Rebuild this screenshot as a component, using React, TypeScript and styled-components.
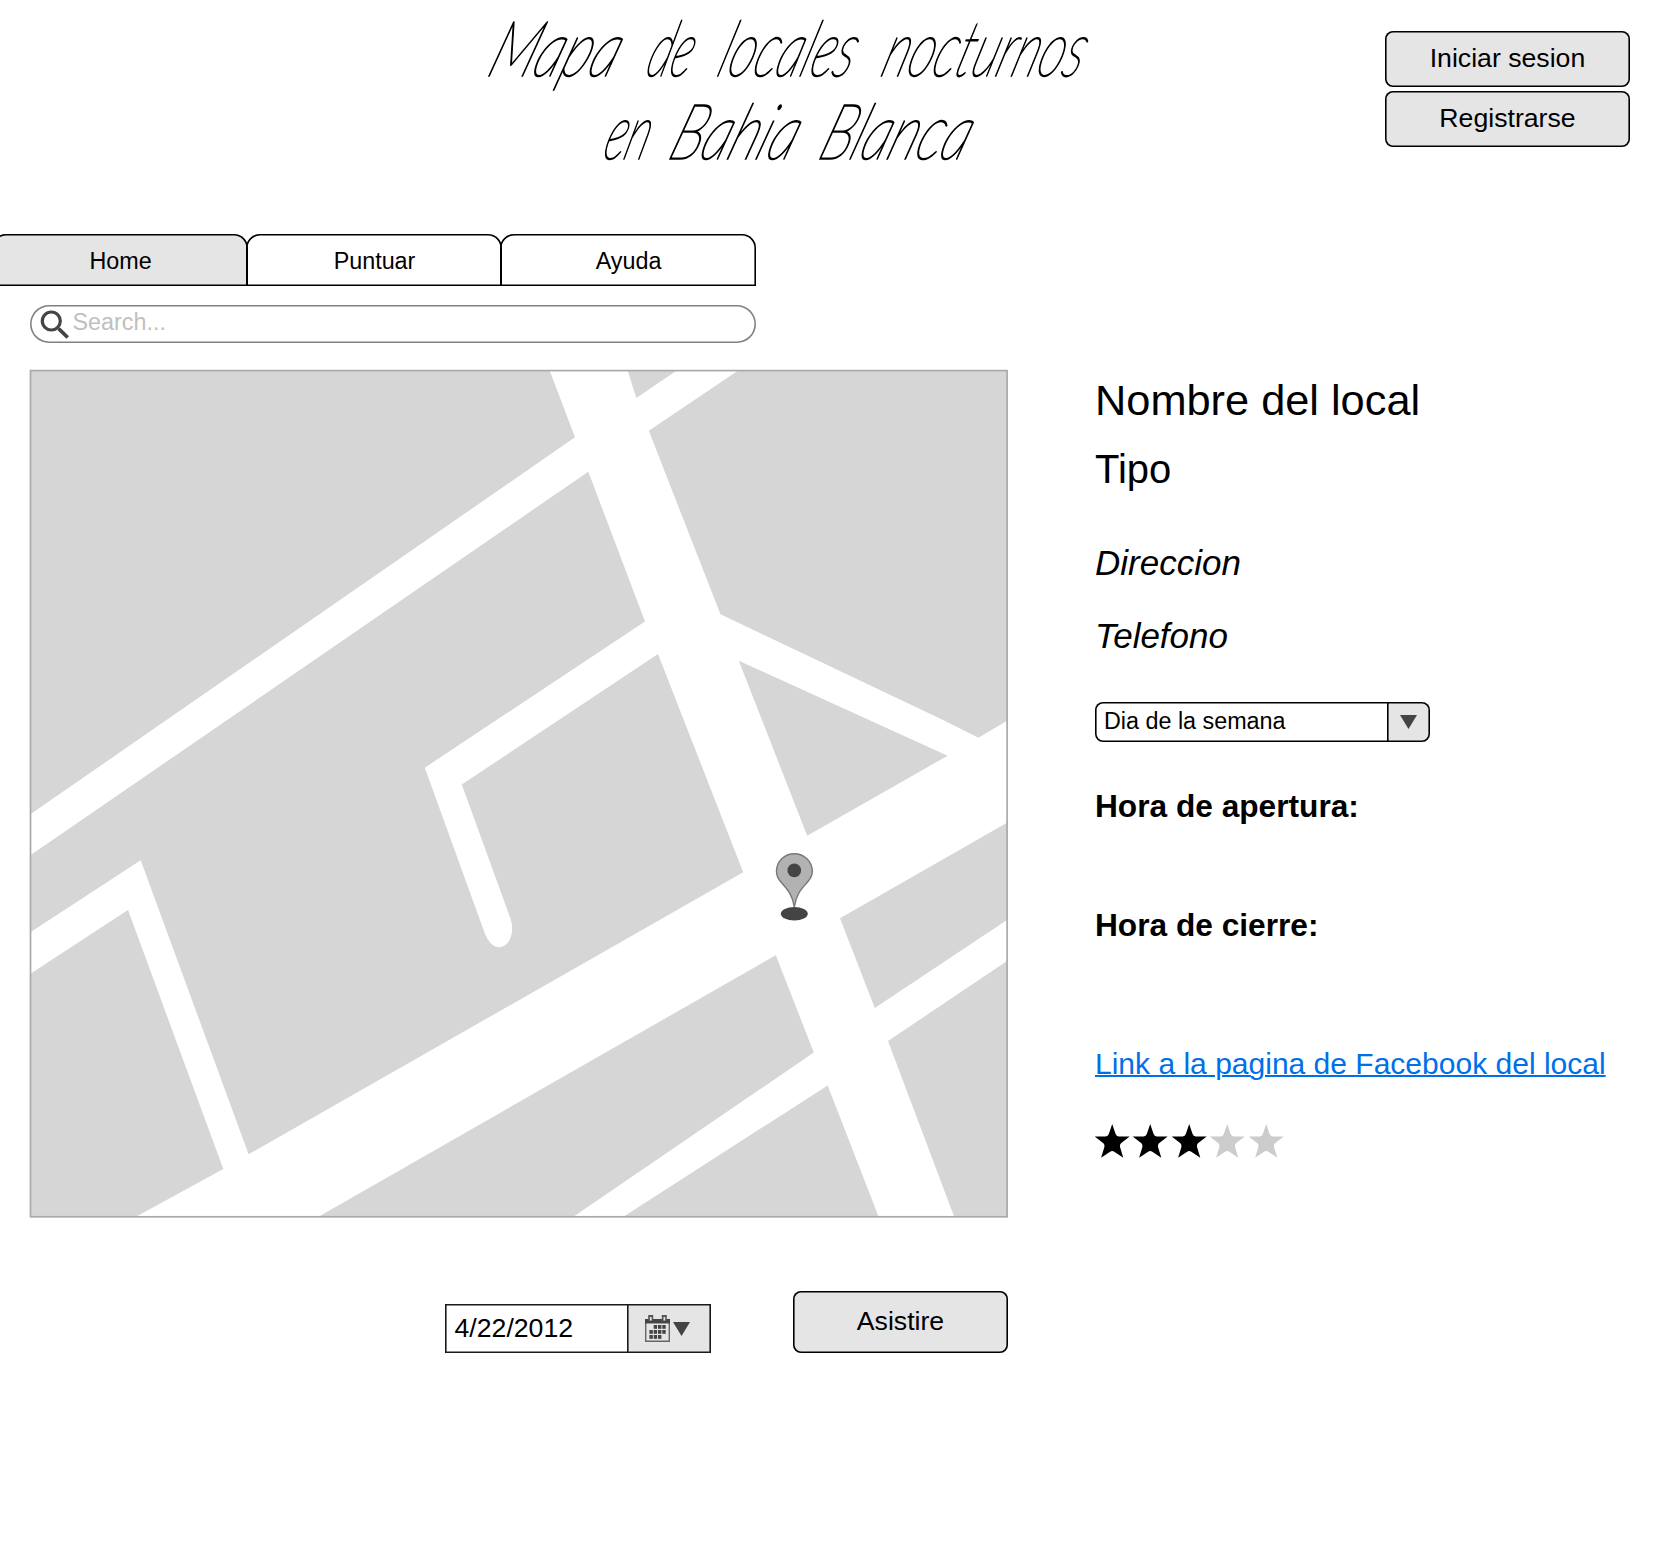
import React from "react";
import styled, { createGlobalStyle } from "styled-components";

const GlobalStyle = createGlobalStyle`
  * { box-sizing: border-box; }
  body {
    margin: 0;
    background: #fff;
    color: #000;
    font-family: "Liberation Sans", Arial, sans-serif;
    overflow-x: hidden;
  }
`;

const Page = styled.div`
  width: 1662px;
  height: 1564px;
  overflow: hidden;
  display: flex;
  flex-direction: column;
`;

const Header = styled.header`
  height: 234px;
  display: grid;
  grid-template-columns: 485px 1fr auto;
  align-items: start;
`;

const Title = styled.h1`
  grid-column: 2;
  margin: 0;
  padding-top: 5px;
  font-family: Lato, "Open Sans", sans-serif;
  font-style: italic;
  font-weight: 100;
  font-size: 77px;
  line-height: 83px;
  -webkit-text-stroke: 1.6px #000;
`;

const TitleLine = styled.span<{ $indent: number; $columns: string }>`
  display: grid;
  grid-template-columns: ${(p) => p.$columns};
  height: 83px;
  padding-left: ${(p) => p.$indent}px;
`;

const Word = styled.span<{ $stretch: number }>`
  width: max-content;
  padding-right: 6px;
  white-space: nowrap;
  transform: scaleX(${(p) => p.$stretch}) skewX(-27deg);
  transform-origin: 0 70px;
`;

const Account = styled.div`
  justify-self: end;
  margin: 31px 32px 0 0;
  display: flex;
  flex-direction: column;
  gap: 4px;
`;

const Button = styled.button<{ $w: number; $h: number }>`
  width: ${(p) => p.$w}px;
  height: ${(p) => p.$h}px;
  padding: 0 0 2px;
  border: 0;
  border-radius: 8px;
  background: #e5e5e5;
  box-shadow: inset 0 0 0 1.6px #000;
  color: #000;
  font: 26.67px "Liberation Sans", Arial, sans-serif;
`;

const Tabs = styled.nav`
  display: flex;
  margin-left: -8px;
`;

const Tab = styled.a<{ $active?: boolean }>`
  width: 256px;
  height: 52px;
  margin-right: -2px;
  padding: 2px 0 0 1px;
  display: flex;
  align-items: center;
  justify-content: center;
  border-radius: 14px 14px 0 0;
  background: ${(p) => (p.$active ? "#e5e5e5" : "transparent")};
  box-shadow: inset 0 0 0 1.6px #000;
  font-size: 23.33px;
`;

const Search = styled.label`
  width: 726px;
  height: 38.5px;
  margin: 18.5px 0 0 30px;
  padding: 0 0 2px 9.5px;
  display: flex;
  align-items: center;
  gap: 3px;
  border-radius: 20px;
  box-shadow: inset 0 0 0 1.6px #808080;
  color: #c0c0c0;
  font-size: 23.33px;

  svg { margin-top: 2px; }
`;

const Content = styled.main`
  display: grid;
  grid-template-columns: 979px 1fr;
  column-gap: 87px;
  margin: 26px 0 0 29px;
`;

const MapView = styled.svg`
  display: block;
  width: 979px;
  height: 849px;
`;

const Details = styled.section`
  padding-top: 6px;
  display: flex;
  flex-direction: column;
  align-items: flex-start;
`;

const Text = styled.p<{ $size: number; $line: number; $after: number; $italic?: boolean; $bold?: boolean }>`
  margin: 0 0 ${(p) => p.$after}px;
  font-size: ${(p) => p.$size}px;
  line-height: ${(p) => p.$line}px;
  font-style: ${(p) => (p.$italic ? "italic" : "normal")};
  font-weight: ${(p) => (p.$bold ? 700 : 400)};
  white-space: nowrap;
`;

const DaySelect = styled.div`
  width: 335px;
  height: 40px;
  margin-bottom: 46px;
  display: grid;
  grid-template-columns: 1fr 43px;
  border-radius: 8px;
  overflow: hidden;
  box-shadow: inset 0 0 0 1.6px #000;
`;

const SelectValue = styled.span`
  padding: 6px 0 0 9px;
  font-size: 23.33px;
  line-height: 26px;
`;

const SelectArrow = styled.span`
  display: flex;
  justify-content: center;
  padding-top: 13px;
  border-radius: 0 8px 8px 0;
  background: #e5e5e5;
  box-shadow: inset 0 0 0 1.6px #000;
`;

const FacebookLink = styled.a`
  margin-bottom: 43.5px;
  color: #0070e8;
  font-size: 30.03px;
  line-height: 34px;
  white-space: nowrap;
  text-decoration: underline;
  text-decoration-thickness: 1.6px;
`;

const Rating = styled.div`
  display: flex;
  gap: 3.4px;
`;

const Footer = styled.footer`
  width: 1008px;
  margin-top: 73px;
  display: flex;
  justify-content: flex-end;
  align-items: flex-end;
  gap: 82px;
`;

const DateField = styled.div`
  width: 266px;
  height: 49px;
  display: grid;
  grid-template-columns: 1fr 84px;
  box-shadow: inset 0 0 0 1.6px #1a1a1a;
`;

const DateValue = styled.span`
  padding: 9px 0 0 9.5px;
  font-size: 26.67px;
  line-height: 30px;
`;

const DatePicker = styled.span`
  display: flex;
  align-items: flex-start;
  gap: 3px;
  padding: 11px 0 0 18px;
  background: #e5e5e5;
  box-shadow: inset 0 0 0 1.6px #1a1a1a;
`;

const PickerArrow = styled.span`
  padding-top: 7px;
  line-height: 0;
`;

const TriangleSvg = styled.svg`
  display: block;
`;

const Triangle = () => (
  <TriangleSvg width="17" height="14" viewBox="0 0 17 14">
    <path d="M0 0H17L8.5 14Z" fill="#444" />
  </TriangleSvg>
);

const Magnifier = () => (
  <svg width="30" height="30" viewBox="0 0 30 30" fill="none" stroke="#444">
    <circle cx="11.3" cy="12" r="9" strokeWidth="3.2" />
    <path d="M18.5 19.5L27.7 28.5" strokeWidth="3.8" />
  </svg>
);

const CALENDAR_DAYS = [
  [8.7, 10], [13, 10], [17.3, 10],
  [4.4, 15], [8.7, 15], [13, 15], [17.3, 15],
  [4.4, 20], [8.7, 20], [13, 20],
];

const Calendar = () => (
  <svg width="25" height="27" viewBox="0 0 25 27">
    <path d="M0 4H25V27H0Z" fill="#666" />
    <path d="M0 4H25V8.5H0Z" fill="#444" />
    <path d="M1.4 8.5H23.6V25.5H1.4Z" fill="#e5e5e5" />
    <path d="M3.2 0H8.2V6H3.2ZM16.8 0H21.8V6H16.8Z" fill="#555" />
    <path d="M4.9 2H6.6V5.5H4.9ZM18.5 2H20.2V5.5H18.5Z" fill="#e5e5e5" />
    {CALENDAR_DAYS.map(([x, y]) => (
      <rect key={`${x}-${y}`} x={x} y={y} width="3.4" height="3.8" fill="#444" />
    ))}
  </svg>
);

const Star = ({ on }: { on: boolean }) => (
  <svg width="35" height="34" viewBox="0 0 35 34">
    <path
      d="M17.2 0L20.5 9.8Q21.4 12.4 23.7 12.4L34.7 12.6L26 19.2Q24.5 20.7 25.1 23.2L28.3 33.7L19.3 27.7Q17.2 26.3 15.1 27.7L6.1 33.7L9.3 23.2Q9.9 20.7 8.4 19.2L-.3 12.6L10.7 12.4Q13 12.4 13.9 9.8Z"
      fill={on ? "#000" : "#ccc"}
    />
  </svg>
);

const BLOCKS = [
  "M30 370H549.5L575 437.3L30 814.5Z",
  "M627.5 370L636.3 398L677.5 370Z",
  "M739 370L648.8 430.8L720.5 614.3L942 719.5L978.5 737.7L1007 720.7V370Z",
  "M588.3 471.7L30 855.5V932.5L140.7 860.3L248.6 1154.3L743.2 872.3L658 654L461.8 784.5L511 920C513.6 929 511.5 938 508 942.5C502.5 949 495.5 948 491.5 944C488 940.5 485.8 936 484.5 932.5L424.8 767.7L645 621.4Z",
  "M738.8 660.7L947.6 755.7L807.2 835.8Z",
  "M1007 822.7L840 918.3L874.8 1008L1007 920Z",
  "M1007 961L888 1041L954.3 1217H1007Z",
  "M775.8 955.2L813.8 1052.6L573 1217H318Z",
  "M827.7 1085.4L878.7 1217H623Z",
  "M30 974L128 910L223.3 1169L135.5 1217H30Z",
];

const LocalMap = () => (
  <MapView viewBox="29 369 979 849">
    {BLOCKS.map((d) => (
      <path key={d} d={d} fill="#d6d6d6" />
    ))}
    <rect x="30.5" y="370.6" width="976.6" height="846.2" fill="none" stroke="#aaa" strokeWidth="1.7" />
    <ellipse cx="794.3" cy="913.8" rx="13.5" ry="6.8" fill="#444" />
    <path
      d="M794.3 907C792 892 785 887 780.5 881.5C777.5 878 776.5 874.5 776.5 871.5C776.5 861.5 784.5 853.7 794.3 853.7C804.1 853.7 812.3 861.5 812.3 871.5C812.3 874.5 811 878 808 881.5C803.5 887 796.6 892 794.3 907Z"
      fill="#b2b2b2"
      stroke="#777"
      strokeWidth="1.4"
    />
    <circle cx="794.3" cy="870.4" r="6.8" fill="#444" />
  </MapView>
);

export default function App() {
  return (
    <>
      <GlobalStyle />
      <Page>
        <Header>
          <Title>
            <TitleLine $indent={0} $columns="159px 71px 164px 1fr">
              <Word $stretch={0.725}>Mapa</Word>
              <Word $stretch={0.59}>de</Word>
              <Word $stretch={0.65}>locales</Word>
              <Word $stretch={0.645}>nocturnos</Word>
            </TitleLine>
            <TitleLine $indent={116} $columns="65px 150px 1fr">
              <Word $stretch={0.59}>en</Word>
              <Word $stretch={0.725}>Bahia</Word>
              <Word $stretch={0.715}>Blanca</Word>
            </TitleLine>
          </Title>
          <Account>
            <Button $w={245} $h={56}>Iniciar sesion</Button>
            <Button $w={245} $h={56}>Registrarse</Button>
          </Account>
        </Header>
        <Tabs>
          <Tab $active>Home</Tab>
          <Tab>Puntuar</Tab>
          <Tab>Ayuda</Tab>
        </Tabs>
        <Search>
          <Magnifier />
          <span>Search...</span>
        </Search>
        <Content>
          <LocalMap />
          <Details>
            <Text $size={43.33} $line={50} $after={21}>Nombre del local</Text>
            <Text $size={40} $line={46} $after={50.5}>Tipo</Text>
            <Text $size={35} $line={40} $after={33} $italic>Direccion</Text>
            <Text $size={35} $line={40} $after={46.5} $italic>Telefono</Text>
            <DaySelect>
              <SelectValue>Dia de la semana</SelectValue>
              <SelectArrow><Triangle /></SelectArrow>
            </DaySelect>
            <Text $size={31.67} $line={36} $after={83} $bold>Hora de apertura:</Text>
            <Text $size={31.67} $line={36} $after={103.5} $bold>Hora de cierre:</Text>
            <FacebookLink>Link a la pagina de Facebook del local</FacebookLink>
            <Rating>
              {[1, 2, 3, 4, 5].map((n) => (
                <Star key={n} on={n <= 3} />
              ))}
            </Rating>
          </Details>
        </Content>
        <Footer>
          <DateField>
            <DateValue>4/22/2012</DateValue>
            <DatePicker>
              <Calendar />
              <PickerArrow><Triangle /></PickerArrow>
            </DatePicker>
          </DateField>
          <Button $w={215} $h={62}>Asistire</Button>
        </Footer>
      </Page>
    </>
  );
}
